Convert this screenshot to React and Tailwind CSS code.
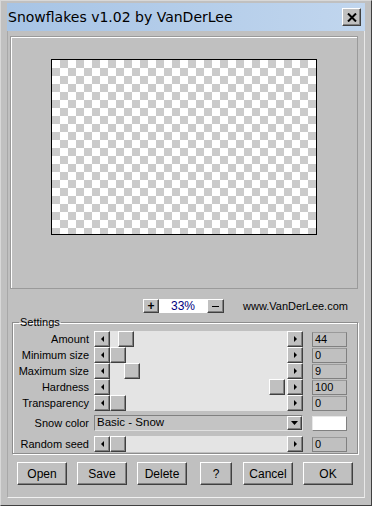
import React from "react";

const rows = [
  { label: "Amount", value: "44", pos: 8 },
  { label: "Minimum size", value: "0", pos: 0 },
  { label: "Maximum size", value: "9", pos: 14 },
  { label: "Hardness", value: "100", pos: 159 },
  { label: "Transparency", value: "0", pos: 0 },
];

function Arrow({ dir }) {
  const d = dir === "left" ? "M4 0 L4 6 L1 3 Z" : dir === "right" ? "M1 0 L1 6 L4 3 Z" : "M0 1 L7 1 L3.5 5 Z";
  const w = dir === "down" ? 7 : 5;
  return (
    <svg width={w} height="6" viewBox={`0 0 ${w} 6`}>
      <path d={d} fill="#000" />
    </svg>
  );
}

function RaisedBox({ className = "", children }) {
  return (
    <div
      className={`bg-[#c0c0c0] border border-t-[#ffffff] border-l-[#ffffff] border-r-[#404040] border-b-[#404040] shadow-[inset_-1px_-1px_0_#808080] flex items-center justify-center ${className}`}
    >
      {children}
    </div>
  );
}

function ScrollBar({ pos }) {
  return (
    <div className="flex h-[16px] w-[209px]">
      <RaisedBox className="w-[16px] h-[16px]">
        <Arrow dir="left" />
      </RaisedBox>
      <div className="relative flex-1 bg-[#e4e4e4]">
        <div className="absolute top-0 w-[16px] h-[16px]" style={{ left: pos }}>
          <RaisedBox className="w-[16px] h-[16px]" />
        </div>
      </div>
      <RaisedBox className="w-[16px] h-[16px]">
        <Arrow dir="right" />
      </RaisedBox>
    </div>
  );
}

function ValueBox({ children }) {
  return (
    <div className="w-[35px] h-[15px] border border-[#808080] border-t-[#9a9a9a] bg-[#c0c0c0] pl-[2px] text-[11px] leading-[13px] text-black">
      {children}
    </div>
  );
}

function Row({ label, children, right, className = "" }) {
  return (
    <div className={`flex items-center ${className}`}>
      <div className="w-[76px] text-right text-[11px] leading-[13px] text-black whitespace-nowrap">{label}</div>
      <div className="ml-[5px]">{children}</div>
      <div className="ml-[9px]">{right}</div>
    </div>
  );
}

function Button({ label, w = "w-[50px]", className = "" }) {
  return (
    <RaisedBox className={`${w} h-[23px] text-[12px] text-black ${className}`}>{label}</RaisedBox>
  );
}

export default function App() {
  return (
    <div
      className="w-[372px] h-[506px] bg-[#c0c0c0] border border-t-[#d8d8d8] border-l-[#d8d8d8] border-r-[#404040] border-b-[#404040] flex flex-col pt-[2px] px-[6px] overflow-hidden"
      style={{ fontFamily: '"Liberation Sans", Arial, sans-serif' }}
    >
      {/* title bar */}
      <div className="h-[28px] shrink-0 flex items-center justify-between bg-gradient-to-r from-[#a7c4e5] to-[#c1d6ee] pl-[1px] pr-[4px]">
        <span className="text-[14px] text-black font-['DejaVu_Sans',sans-serif]">Snowflakes v1.02 by VanDerLee</span>
        <RaisedBox className="w-[19px] h-[18px]">
          <svg width="10" height="9" viewBox="0 0 10 9">
            <path d="M1 0.5 L9 8.5 M9 0.5 L1 8.5" stroke="#000" strokeWidth="2" />
          </svg>
        </RaisedBox>
      </div>

      <div className="flex-1 flex flex-col border-l border-l-[#a8a8a8] border-r border-r-[#e8e8e8] border-b border-b-[#f0f0f0] mb-[7px]">
        {/* preview panel */}
        <div className="ml-[2px] mr-[6px] mt-[5px] h-[253px] border border-[#9a9a9a] shadow-[inset_1px_1px_0_#ffffff] pt-[22px]">
          <div className="mx-auto w-[266px] h-[176px] border border-black bg-[conic-gradient(#cbcbcb_25%,#ffffff_0_50%,#cbcbcb_0_75%,#ffffff_0)] bg-[length:16px_16px]" />
        </div>

        {/* zoom row */}
        <div className="flex items-center h-[14px] mt-[10px]">
          <div className="ml-[135px] flex items-center">
            <RaisedBox className="w-[16px] h-[14px] text-[12px] font-bold leading-none">+</RaisedBox>
            <div className="w-[48px] h-[14px] bg-white text-center text-[12px] leading-[14px] text-[#000080]">33%</div>
            <RaisedBox className="w-[17px] h-[14px]">
              <div className="w-[7px] h-[1px] bg-black" />
            </RaisedBox>
          </div>
          <span className="ml-[19px] text-[11px] text-black">www.VanDerLee.com</span>
        </div>

        {/* settings */}
        <fieldset className="ml-[4px] mr-[6px] mt-[3px] h-[138px] border border-[#8c8c8c] shadow-[1px_1px_0_#ffffff,inset_1px_1px_0_#ffffff] px-0">
          <legend className="ml-[6px] px-[1px] text-[11px] leading-[13px] text-black">Settings</legend>
          <div className="pt-[2px] flex flex-col">
            {rows.map((r) => (
              <Row key={r.label} label={r.label} right={<ValueBox>{r.value}</ValueBox>}>
                <ScrollBar pos={r.pos} />
              </Row>
            ))}
            <Row
              label="Snow color"
              className="mt-[4px]"
              right={<div className="w-[35px] h-[15px] bg-white border border-[#e8e8e8] border-r-[#808080] border-b-[#808080]" />}
            >
              <div className="flex w-[209px] h-[16px] border border-[#808080] border-b-[#e0e0e0] border-r-[#e0e0e0] bg-[#c4c4c4]">
                <span className="flex-1 pl-[2px] text-[11.5px] text-black h-[14px] flex items-center">Basic - Snow</span>
                <RaisedBox className="w-[15px] h-[14px]">
                  <Arrow dir="down" />
                </RaisedBox>
              </div>
            </Row>
            <Row label="Random seed" className="mt-[5px]" right={<ValueBox>0</ValueBox>}>
              <ScrollBar pos={0} />
            </Row>
          </div>
        </fieldset>

        {/* buttons */}
        <div className="flex items-center mt-[8px] pl-[9px]">
          <Button label="Open" />
          <Button label="Save" className="ml-[10px]" />
          <Button label="Delete" className="ml-[10px]" />
          <Button label="?" w="w-[32px]" className="ml-[13px]" />
          <Button label="Cancel" className="ml-[11px]" />
          <Button label="OK" className="ml-[10px]" />
        </div>
      </div>
    </div>
  );
}
